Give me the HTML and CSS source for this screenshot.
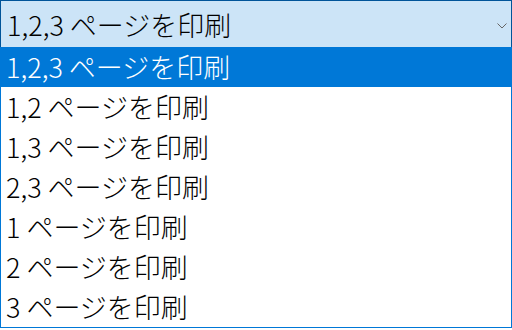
FILE: index.html
```html
<!DOCTYPE html>
<html lang="ja">
<head>
  <meta charset="UTF-8">
  <title>印刷範囲</title>
  <link rel="stylesheet" href="styles.css">
</head>
<body>
  <div class="combo">
    <div class="combo-value">
      <span>1,2,3 ページを印刷</span>
      <svg class="chevron" width="10" height="6" viewBox="0 0 10 6">
        <polyline points="0.5,0.5 5,5 9.5,0.5" fill="none" stroke="#666" stroke-width="1"/>
      </svg>
    </div>
    <ul class="combo-list">
      <li class="selected">1,2,3 ページを印刷</li>
      <li>1,2 ページを印刷</li>
      <li>1,3 ページを印刷</li>
      <li>2,3 ページを印刷</li>
      <li>1 ページを印刷</li>
      <li>2 ページを印刷</li>
      <li>3 ページを印刷</li>
    </ul>
  </div>
</body>
</html>
```

FILE: styles.css
```css
body {
  margin: 0;
  background-color: #fff;
  font-family: "Noto Sans CJK JP", "Noto Sans", sans-serif;
  font-size: 27px;
  font-weight: 300;
  color: #000;
}
.combo {
  width: 512px;
}
.combo-value {
  display: flex;
  align-items: center;
  justify-content: space-between;
  height: 46px;
  padding: 0 4px 0 6px;
  background-color: #cce4f7;
  border: 1px solid #005499;
  border-bottom: none;
  box-sizing: content-box;
  width: 500px;
}
.chevron {
  margin-top: 4px;
}
.combo-list {
  list-style: none;
  margin: 0;
  padding: 0;
  border: 1px solid #0078d7;
  border-top: none;
}
.combo-list li {
  height: 40px;
  line-height: 40px;
  padding-left: 5px;
}
.combo-list li.selected {
  background-color: #0078d7;
  color: #fff;
}
```
